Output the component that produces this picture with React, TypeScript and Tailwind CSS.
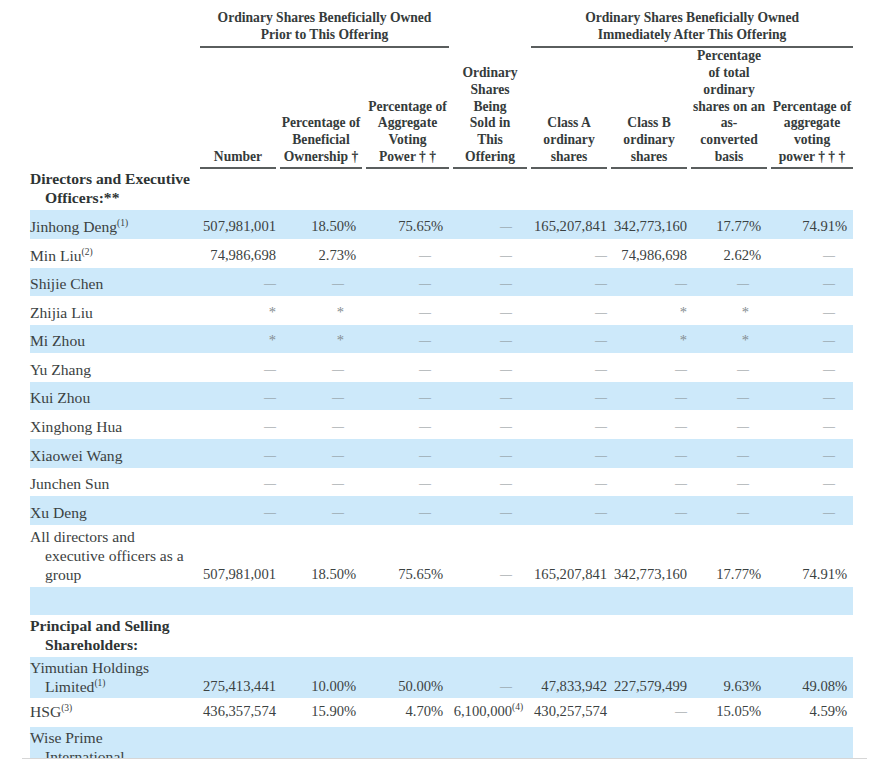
import React from 'react';

type Cell = string | { v: string; sup: string };

type Row = {
  name: string[];
  sup?: string;
  bold?: boolean;
  blue?: boolean;
  pt?: string;
  pb?: string;
  cells?: Cell[];
};

// per column: right padding + width of the trailing slot (% sign / footnote)
const cols = [
  { pad: 'pr-0', slot: 'w-0', split: false },
  { pad: 'pr-[6px]', slot: 'w-[12px]', split: true },
  { pad: 'pr-[6px]', slot: 'w-[12px]', split: true },
  { pad: 'pr-[3px]', slot: 'w-[12px]', split: false },
  { pad: 'pr-0', slot: 'w-0', split: false },
  { pad: 'pr-0', slot: 'w-0', split: false },
  { pad: 'pr-[6px]', slot: 'w-[12px]', split: true },
  { pad: 'pr-[6px]', slot: 'w-[12px]', split: true },
];

const D = '—';
const dashes: Cell[] = [D, D, D, D, D, D, D, D];

const rows: Row[] = [
  { name: ['Directors and Executive', 'Officers:**'], bold: true, pt: 'pt-0' },
  { name: ['Jinhong Deng'], sup: '(1)', blue: true, cells: ['507,981,001', '18.50%', '75.65%', D, '165,207,841', '342,773,160', '17.77%', '74.91%'] },
  { name: ['Min Liu'], sup: '(2)', cells: ['74,986,698', '2.73%', D, D, D, '74,986,698', '2.62%', D] },
  { name: ['Shijie Chen'], blue: true, cells: dashes },
  { name: ['Zhijia Liu'], cells: ['*', '*', D, D, D, '*', '*', D] },
  { name: ['Mi Zhou'], blue: true, cells: ['*', '*', D, D, D, '*', '*', D] },
  { name: ['Yu Zhang'], cells: dashes },
  { name: ['Kui Zhou'], blue: true, cells: dashes },
  { name: ['Xinghong Hua'], cells: dashes },
  { name: ['Xiaowei Wang'], blue: true, cells: dashes },
  { name: ['Junchen Sun'], cells: dashes },
  { name: ['Xu Deng'], blue: true, cells: dashes },
  { name: ['All directors and', 'executive officers as a', 'group'], pt: 'pt-[2px]', cells: ['507,981,001', '18.50%', '75.65%', D, '165,207,841', '342,773,160', '17.77%', '74.91%'] },
  { name: [''], blue: true },
  { name: ['Principal and Selling', 'Shareholders:'], bold: true, pt: 'pt-[1px]' },
  { name: ['Yimutian Holdings', 'Limited'], sup: '(1)', blue: true, pt: 'pt-[1px]', pb: 'pb-[2px]', cells: ['275,413,441', '10.00%', '50.00%', D, '47,833,942', '227,579,499', '9.63%', '49.08%'] },
  { name: ['HSG'], sup: '(3)', pb: 'pb-[6px]', cells: ['436,357,574', '15.90%', '4.70%', { v: '6,100,000', sup: '(4)' }, '430,257,574', D, '15.05%', '4.59%'] },
  { name: ['Wise Prime', 'International', 'Limited'], blue: true, pt: 'pt-[1px]' },
];

const headers: string[][] = [
  ['Number'],
  ['Percentage of', 'Beneficial', 'Ownership †'],
  ['Percentage of', 'Aggregate', 'Voting', 'Power † †'],
  ['Ordinary', 'Shares', 'Being', 'Sold in', 'This', 'Offering'],
  ['Class A', 'ordinary', 'shares'],
  ['Class B', 'ordinary', 'shares'],
  ['Percentage', 'of total', 'ordinary', 'shares on an', 'as-', 'converted', 'basis'],
  ['Percentage of', 'aggregate', 'voting', 'power † † †'],
];

function Note({ text }: { text: string }) {
  return <span className="text-[9.5px] leading-none relative -top-[6px]">{text}</span>;
}

function Value({ cell, col }: { cell: Cell; col: number }) {
  const c = cols[col];
  let main = '';
  let slot: React.ReactNode = null;
  if (typeof cell === 'string') {
    if (c.split && cell.endsWith('%')) {
      main = cell.slice(0, -1);
      slot = '%';
    } else {
      main = cell;
    }
  } else {
    main = cell.v;
    slot = <Note text={cell.sup} />;
  }
  const muted = main === D || main === '*';
  return (
    <div className={`flex justify-end items-baseline ${c.pad}`}>
      <span className={muted ? (main === D ? 'text-[#858d90] text-[12px]' : 'text-[#858d90]') : ''}>{main}</span>
      <span className={`${c.slot} text-left whitespace-nowrap`}>{slot}</span>
    </div>
  );
}

export default function App() {
  return (
    <div className="w-[881px] h-[764px] bg-white overflow-hidden" style={{ fontFamily: '"Liberation Serif", serif' }}>
      <div className="ml-[22px] w-[845px] h-[759px] overflow-hidden border-b border-[#d6d6d6] pl-[8px]">
        <table className="table-fixed border-collapse w-[823px] text-[#3b4242]">
          <colgroup>
            <col className="w-[166px]" />
            <col className="w-[80px]" />
            <col className="w-[86px]" />
            <col className="w-[87px]" />
            <col className="w-[78px]" />
            <col className="w-[80px]" />
            <col className="w-[80px]" />
            <col className="w-[80px]" />
            <col className="w-[86px]" />
          </colgroup>
          <thead className="font-bold text-[13.6px] leading-[16.7px] text-[#353b3b]">
            <tr>
              <th />
              <th colSpan={3} className="pl-[4px] pt-[10px] align-bottom">
                <div className="border-b-2 border-[#5a5e5e] pb-[3px] font-bold">
                  Ordinary Shares Beneficially Owned
                  <br />
                  Prior to This Offering
                </div>
              </th>
              <th />
              <th colSpan={4} className="pl-[4px] pt-[10px] align-bottom">
                <div className="border-b-2 border-[#5a5e5e] pb-[3px] font-bold">
                  Ordinary Shares Beneficially Owned
                  <br />
                  Immediately After This Offering
                </div>
              </th>
            </tr>
            <tr>
              <th />
              {headers.map((lines, i) => (
                <th key={i} className="pl-[4px] align-bottom">
                  <div className="border-b-2 border-[#5a5e5e] pb-[2px] whitespace-nowrap font-bold">
                    {lines.map((l, j) => (
                      <div key={j}>{l}</div>
                    ))}
                  </div>
                </th>
              ))}
            </tr>
          </thead>
          <tbody className="leading-[19px]">
            {rows.map((r, i) => (
              <tr key={i} className={`h-[28.6px] ${r.blue ? 'bg-[#cde9fa]' : ''}`}>
                <td className={`align-bottom ${r.pt ?? 'pt-0'} ${r.pb ?? 'pb-[3px]'} text-[15.6px] ${r.bold ? 'font-bold text-[#2e3434]' : ''}`}>
                  {r.name.map((l, j) => (
                    <div key={j} className={`whitespace-nowrap ${j > 0 ? 'pl-[15px]' : ''}`}>
                      {l}
                      {j === r.name.length - 1 && r.sup ? <Note text={r.sup} /> : null}
                    </div>
                  ))}
                </td>
                {Array.from({ length: 8 }).map((_, c) => (
                  <td key={c} className={`align-bottom pl-[4px] pt-0 ${r.pb ?? 'pb-[3px]'} text-[14.6px] whitespace-nowrap`}>
                    {r.cells ? <Value cell={r.cells[c]} col={c} /> : null}
                  </td>
                ))}
              </tr>
            ))}
          </tbody>
        </table>
      </div>
    </div>
  );
}
